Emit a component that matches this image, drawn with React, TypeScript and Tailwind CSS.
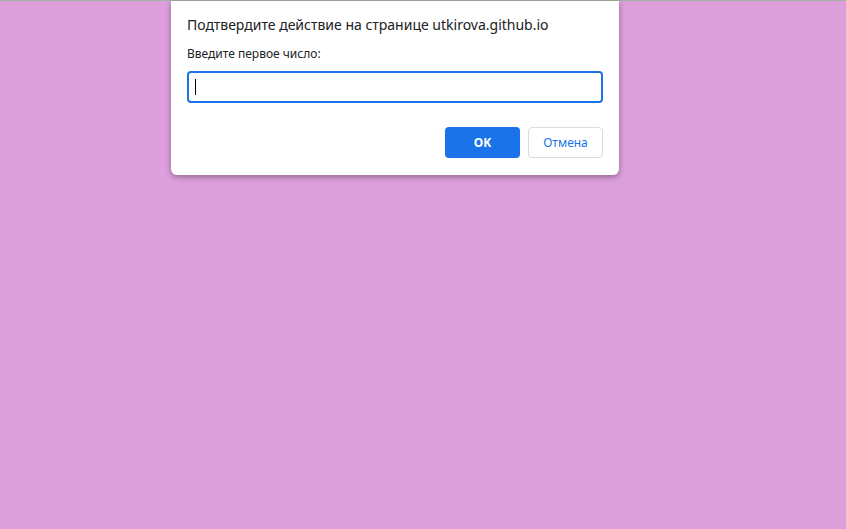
import React from "react";

const App = () => {
  return (
    <div className="w-[846px] h-[529px] bg-[#dda0dd] border-t border-[#a2b2a2] relative font-['Noto_Sans',sans-serif]">
      <div className="absolute left-[171px] top-0 w-[448px] bg-white rounded-b-md shadow-[0_2px_6px_rgba(0,0,0,0.35)] pt-[14px] px-4 pb-[17px]">
        <div className="text-[14px] leading-[20px] text-[#202124]">
          Подтвердите действие на странице utkirova.github.io
        </div>
        <div className="mt-[11px] text-[12px] leading-[16px] text-[#202124]">
          Введите первое число:
        </div>
        <div className="mt-[9px] h-[32px] border-2 border-[#1a73e8] rounded flex items-center px-[6px]">
          <div className="w-px h-[16px] bg-black" />
        </div>
        <div className="mt-6 flex justify-end gap-2">
          <button className="w-[75px] h-[31px] rounded bg-[#1a73e8] text-white text-[12px] font-bold">
            OK
          </button>
          <button className="w-[75px] h-[31px] rounded border border-[#dadce0] bg-white text-[#1a73e8] text-[12px]">
            Отмена
          </button>
        </div>
      </div>
    </div>
  );
};

export default App;
